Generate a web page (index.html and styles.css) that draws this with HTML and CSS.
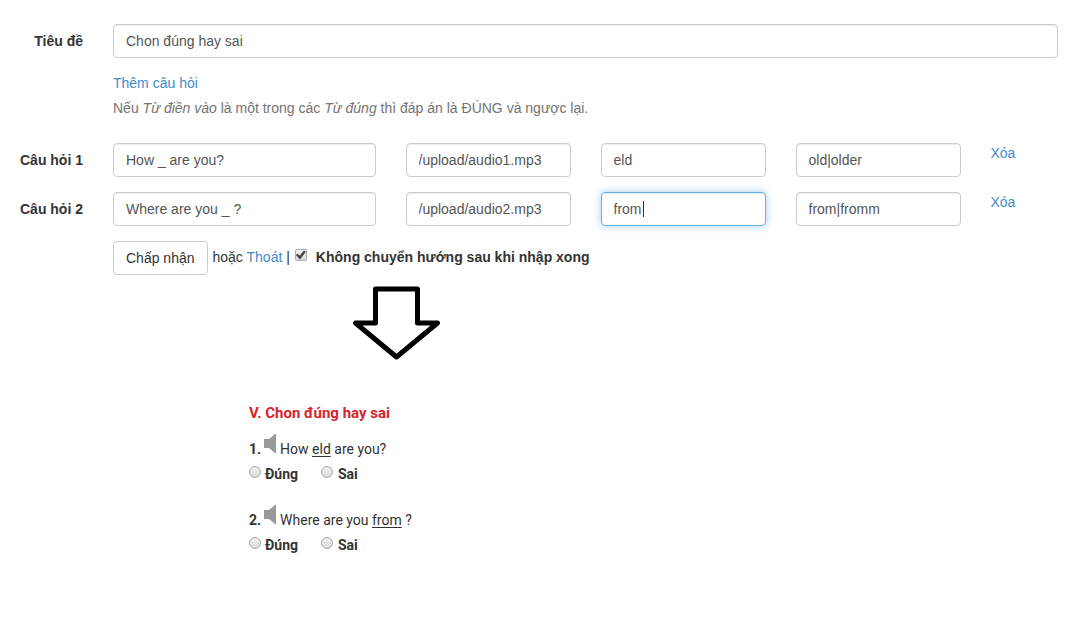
FILE: index.html
```html
<!DOCTYPE html>
<html lang="vi">
<head>
<meta charset="utf-8">
<meta name="viewport" content="width=device-width, initial-scale=1">
<title>Chon đúng hay sai</title>
<link rel="stylesheet" href="styles.css">
</head>
<body>
<form class="editor">
  <div class="form-row">
    <label class="row-label" for="title">Tiêu đề</label>
    <input class="field" id="title" type="text" value="Chon đúng hay sai">
  </div>
  <div class="form-row">
    <div class="row-body intro">
      <a class="link" href="#add">Thêm câu hỏi</a>
      <p class="help">Nếu <em>Từ điền vào</em> là một trong các <em>Từ đúng</em> thì đáp án là ĐÚNG và ngược lại.</p>
    </div>
  </div>
  <div class="form-row">
    <label class="row-label" for="q1">Câu hỏi 1</label>
    <div class="row-body columns">
      <div class="col col-wide"><input class="field" id="q1" type="text" value="How _ are you?"></div>
      <div class="col"><input class="field" type="text" aria-label="Audio 1" value="/upload/audio1.mp3"></div>
      <div class="col"><input class="field" type="text" aria-label="Từ điền vào 1" value="eld"></div>
      <div class="col"><input class="field" type="text" aria-label="Từ đúng 1" value="old|older"></div>
      <div class="col col-narrow"><a class="link" href="#remove-1">Xóa</a></div>
    </div>
  </div>
  <div class="form-row">
    <label class="row-label" for="q2">Câu hỏi 2</label>
    <div class="row-body columns">
      <div class="col col-wide"><input class="field" id="q2" type="text" value="Where are you _ ?"></div>
      <div class="col"><input class="field" type="text" aria-label="Audio 2" value="/upload/audio2.mp3"></div>
      <div class="col"><div class="caret-box"><input class="field field-active" type="text" aria-label="Từ điền vào 2" value="from"><span class="caret"></span></div></div>
      <div class="col"><input class="field" type="text" aria-label="Từ đúng 2" value="from|fromm"></div>
      <div class="col col-narrow"><a class="link" href="#remove-2">Xóa</a></div>
    </div>
  </div>
  <div class="form-row">
    <div class="row-body actions">
      <button class="button" type="button">Chấp nhận</button>
      <span>hoặc <a class="link" href="#exit">Thoát</a> |</span>
      <input class="check" id="stay" type="checkbox" checked>
      <label class="check-label" for="stay">Không chuyển hướng sau khi nhập xong</label>
    </div>
  </div>
</form>

<svg class="arrow" width="88" height="74" viewBox="0 0 88 74" aria-hidden="true">
  <path d="M22.500 3H64.500V37H84.500L43.500 71L2.500 37H22.500Z" fill="#fff" stroke="#000" stroke-width="5" stroke-linejoin="round"/>
</svg>

<section class="quiz">
  <h2 class="quiz-title">V. Chon đúng hay sai</h2>
  <div class="question">
    <p class="prompt"><b>1.</b><svg class="speaker" width="13" height="20" viewBox="0 0 13 20" aria-hidden="true"><path d="M0 5H5L11 0H12V19H11L5 14H0Z" fill="#999"/></svg><span>How <u>eld</u> are you?</span></p>
    <div class="choices">
      <label class="choice"><input class="radio" type="radio" name="a1">Đúng</label>
      <label class="choice choice-false"><input class="radio" type="radio" name="a1">Sai</label>
    </div>
  </div>
  <div class="question">
    <p class="prompt"><b>2.</b><svg class="speaker" width="13" height="20" viewBox="0 0 13 20" aria-hidden="true"><path d="M0 5H5L11 0H12V19H11L5 14H0Z" fill="#999"/></svg><span>Where are you <u>from</u> ?</span></p>
    <div class="choices">
      <label class="choice"><input class="radio" type="radio" name="a2">Đúng</label>
      <label class="choice choice-false"><input class="radio" type="radio" name="a2">Sai</label>
    </div>
  </div>
</section>
</body>
</html>
```
FILE: styles.css
```css
* { box-sizing: border-box; }
body {
  margin: 0;
  background: #fff;
  color: #333;
  font: 14px/20px "Liberation Sans", Arial, sans-serif;
}
.editor {
  display: flex;
  flex-direction: column;
  gap: 15px;
  padding: 24px 17px 0 0;
}
.form-row {
  display: grid;
  grid-template-columns: 83px minmax(0, 1fr);
  column-gap: 30px;
}
.row-label {
  padding-top: 7px;
  text-align: right;
  font-weight: 700;
}
.row-body { grid-column: 2; }
.field {
  display: block;
  width: 100%;
  height: 34px;
  padding: 6px 12px;
  border: 1px solid #ccc;
  border-radius: 4px;
  background: #fff;
  box-shadow: inset 0 1px 1px rgba(0, 0, 0, .075);
  color: #555;
  font: inherit;
}
.field:focus, .field-active {
  border-color: #66afe9;
  outline: 0;
  box-shadow: inset 0 1px 1px rgba(0, 0, 0, .075), 0 0 8px rgba(102, 175, 233, .6);
}
.caret-box { position: relative; }
.caret {
  position: absolute;
  top: 9px;
  left: 42px;
  width: 1px;
  height: 16px;
  background: #333;
}
.link { color: #428bca; text-decoration: none; }
.help { margin: 5px 0 10px; color: #737373; }
.columns { display: flex; margin: 0 -15px; }
.col { width: 20%; padding: 0 15px; }
.col-wide { width: 30%; }
.col-narrow { width: 10%; }
.actions { display: flex; align-items: flex-start; gap: 5px; line-height: 32px; }
.button {
  height: 34px;
  padding: 0 12px;
  border: 1px solid #ccc;
  border-radius: 4px;
  background: #fff;
  color: #333;
  font: inherit;
}
.check, .radio {
  appearance: none;
  flex: none;
  width: 12px;
  height: 12px;
  margin: 0;
  border: 1px solid #aaa;
  background: linear-gradient(#eee, #dcdcdc);
}
.check {
  display: grid;
  place-items: center;
  margin-top: 8px;
  border-radius: 2px;
}
.check:checked::before {
  content: "";
  width: 10px;
  height: 9px;
  background: #444;
  clip-path: polygon(0 50%, 18% 35%, 38% 58%, 80% 0, 100% 14%, 42% 100%);
}
.check-label { margin-left: 4px; font-weight: 700; }
.arrow { display: block; margin: 11px 0 0 353px; }
.quiz {
  margin: 43px 0 0 249px;
  font: 14px/20px Roboto, sans-serif;
}
.quiz-title {
  margin: 0 0 10px;
  color: #d9232a;
  font-size: 15px;
  font-weight: 700;
  line-height: 20px;
}
.question { margin-bottom: 15px; }
.prompt { display: flex; align-items: flex-end; margin: 0; height: 26px; }
.speaker { margin: 0 3px 5px; }
.prompt u { text-underline-offset: 2px; }
.choices { display: flex; height: 30px; padding-top: 5px; }
.choice { display: flex; gap: 4px; width: 72px; font-weight: 700; }
.choice-false { gap: 5px; }
.radio { margin-top: 2px; border-radius: 50%; }
```
